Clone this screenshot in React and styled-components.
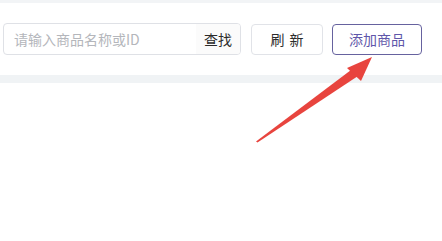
import React from "react";
import styled, { createGlobalStyle } from "styled-components";

const GlobalStyle = createGlobalStyle`
  body {
    margin: 0;
    background: #fff;
    font-family: "Noto Sans CJK SC", "Liberation Sans", sans-serif;
  }
`;

const Page = styled.div`
  position: relative;
  width: 442px;
  height: 241px;
  overflow: hidden;
  background: #fff;
`;

const TopStrip = styled.div`
  height: 3px;
  background: #f2f4f6;
`;

const Toolbar = styled.div`
  display: flex;
  align-items: center;
  height: 72px;
  padding: 0 0 0 3px;
  box-sizing: border-box;
`;

const SearchGroup = styled.div`
  display: flex;
  width: 238px;
  height: 32px;
  border: 1px solid #dfe1e6;
  border-radius: 4px;
  box-sizing: border-box;
  overflow: hidden;
`;

const Input = styled.input`
  flex: 1;
  min-width: 0;
  border: none;
  outline: none;
  padding: 0 0 0 10px;
  font-family: inherit;
  font-size: 14px;
  color: #333;
  background: transparent;

  &::placeholder {
    color: #b4b6bb;
  }
`;

const SearchButton = styled.button`
  width: 44px;
  border: none;
  background: #fbfbfb;
  font-family: inherit;
  font-size: 14px;
  color: #2b2b2b;
  padding: 0;
`;

const Button = styled.button`
  width: ${({ w }) => w}px;
  height: 31px;
  margin-left: ${({ gap }) => gap}px;
  border: 1px solid ${({ primary }) => (primary ? "#66629f" : "#e1e3e8")};
  border-radius: 4px;
  background: #fff;
  font-family: inherit;
  font-size: 14px;
  color: ${({ primary }) => (primary ? "#5f57aa" : "#2b2b2b")};
  padding: 0;
  word-spacing: ${({ spaced }) => (spaced ? "2px" : "0")};
`;

const Band = styled.div`
  height: 8px;
  background: #f0f3f5;
`;

const Arrow = styled.svg`
  position: absolute;
  left: 0;
  top: 0;
  pointer-events: none;
`;

export default function App() {
  return (
    <Page>
      <GlobalStyle />
      <TopStrip />
      <Toolbar>
        <SearchGroup>
          <Input placeholder="请输入商品名称或ID" />
          <SearchButton>查找</SearchButton>
        </SearchGroup>
        <Button w={72} gap={10} spaced>
          刷 新
        </Button>
        <Button w={90} gap={9} primary>
          添加商品
        </Button>
      </Toolbar>
      <Band />
      <Arrow width="442" height="241" viewBox="0 0 442 241">
        <polygon points="256,141.5 257.5,142.5 358,76 353,68.5" fill="#e8443e" />
        <polygon points="372,57 347,68 361,81" fill="#e8443e" />
      </Arrow>
    </Page>
  );
}
